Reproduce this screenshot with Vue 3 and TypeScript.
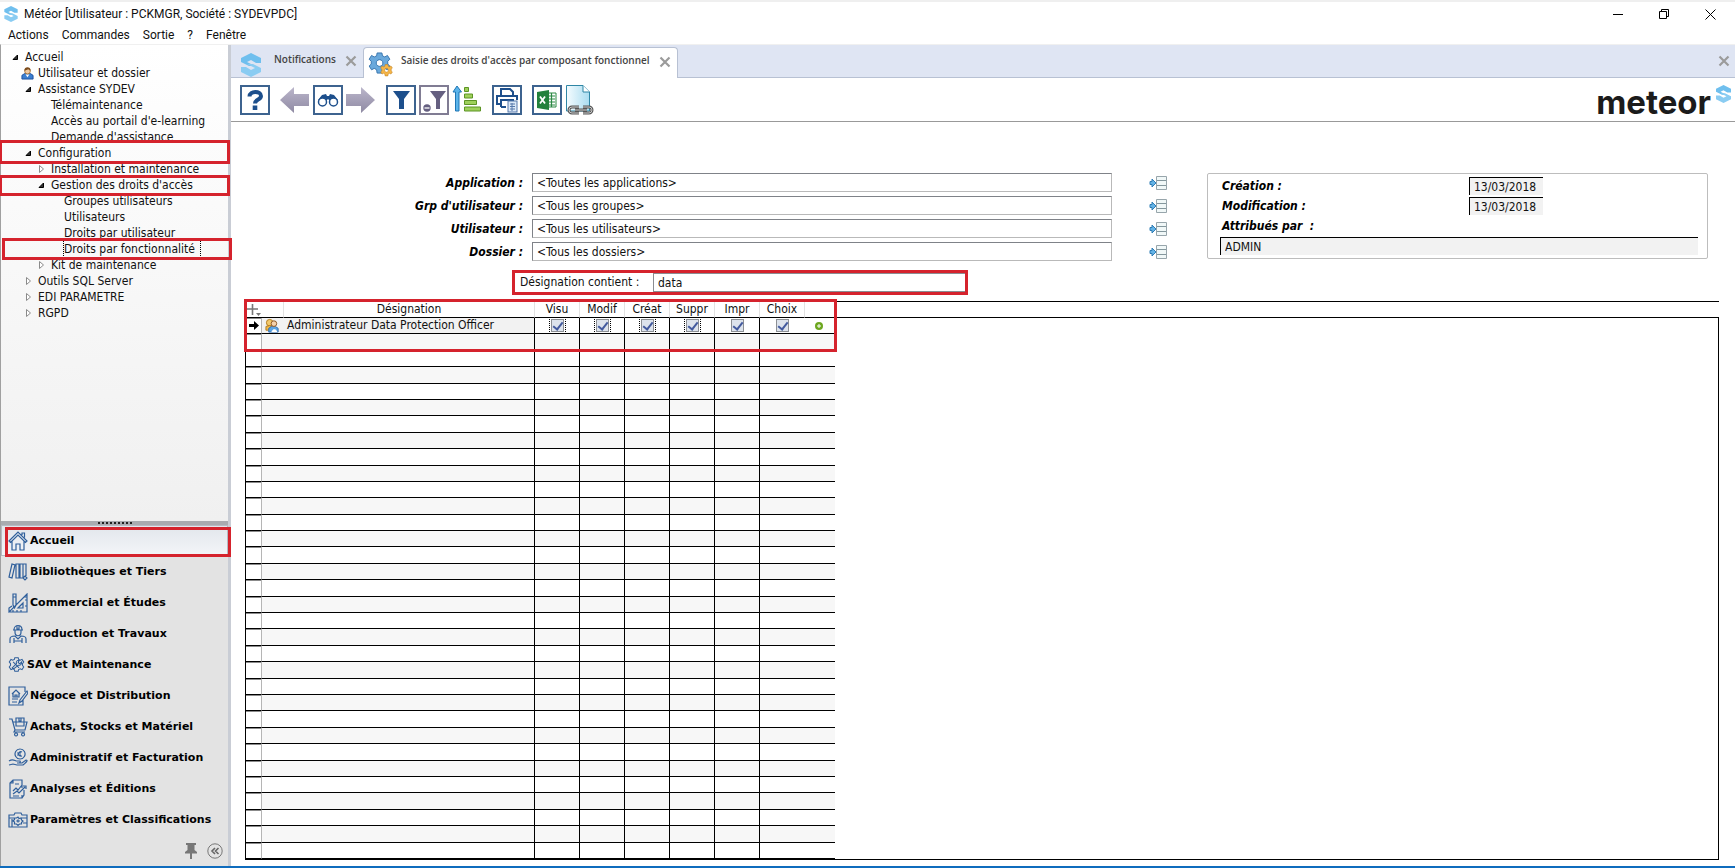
<script setup lang="ts">
import { ref } from 'vue'

interface TreeNode {
  label: string
  level: number
  state?: 'open' | 'closed'
  user?: boolean
  mark?: string
  focused?: boolean
}

const menus = ['Actions', 'Commandes', 'Sortie', '?', 'Fenêtre']

const tree: TreeNode[] = [
  { label: 'Accueil', level: 0, state: 'open' },
  { label: 'Utilisateur et dossier', level: 1, user: true },
  { label: 'Assistance SYDEV', level: 1, state: 'open' },
  { label: 'Télémaintenance', level: 2 },
  { label: "Accès au portail d'e-learning", level: 2 },
  { label: "Demande d'assistance", level: 2 },
  { label: 'Configuration', level: 1, state: 'open', mark: 'tall' },
  { label: 'Installation et maintenance', level: 2, state: 'closed' },
  { label: "Gestion des droits d'accès", level: 2, state: 'open', mark: 'short' },
  { label: 'Groupes utilisateurs', level: 3 },
  { label: 'Utilisateurs', level: 3 },
  { label: 'Droits par utilisateur', level: 3 },
  { label: 'Droits par fonctionnalité', level: 3, mark: 'shifted', focused: true },
  { label: 'Kit de maintenance', level: 2, state: 'closed' },
  { label: 'Outils SQL Server', level: 1, state: 'closed' },
  { label: 'EDI PARAMETRE', level: 1, state: 'closed' },
  { label: 'RGPD', level: 1, state: 'closed' },
]

const modules = [
  { label: 'Accueil', icon: 'M1 10 10 1 19 10 17.5 11.5 10 4 2.5 11.5zM4 10v9h4v-6h4v6h4v-9M14 4V2h2.5v4.5' },
  { label: 'Bibliothèques et Tiers', icon: 'M4 2 1 15l3 1L7 3zM8 2h3v14H8zM12 2h3v14h-3zM15 2h3v12M15 16l2-2 2 2-2 2z' },
  { label: 'Commercial et Études', icon: 'M5 1h3v11l-1.500 3L5 12zM5 4h3M19 1v18H1zM15 10v5h-5zM1 19v-4l3-2M16 4h3M17 7h2M17 13h2M5 19v-2M9 19v-2M13 19v-2' },
  { label: 'Production et Travaux', icon: 'M5 6h10M6 6c0-6 8-6 8 0M9 2v3h2V2M7 6v2c0 5 6 5 6 0V6M2 19v-4c0-2 2-3 5-3l3 3 3-3c3 0 5 1 5 3v4M6 14v5M14 14v5M6 17h8' },
  { label: 'SAV et Maintenance', small: true, icon: 'M8 2h4l.5 2 2 1 2-1 2 3-1.500 2v2l1.500 2-2 3-2-1-2 1-.5 2H8l-.5-2-2-1-2 1-2-3L3 11V9L1.500 7l2-3 2 1 2-1zM5 14l5-5c-1-3 1-4 3-4l-1 3 2 1 2-2c0 4-2 4-4 4l-5 4zM6 7l7 7' },
  { label: 'Négoce et Distribution', icon: 'M17 6V1H1v18h14v-5M4 8l4-4 4 4M5 7v4h6V7M7 11V9h2v2M4 13h6M4 16h5M19 5l-7 9-1 3 3-2 6-8z' },
  { label: 'Achats, Stocks et Matériel', icon: 'M1 2h3l3 11h10l2-8H5M8 1h8v8H8zM11 1v3h2V1M7 13l-1 2h11M8 16a1.500 1.500 0 1 0 .1 0M15 16a1.500 1.500 0 1 0 .1 0' },
  { label: 'Administratif et Facturation', icon: 'M12 1a5 5 0 1 0 .1 0M14 4c-4-2-5 5 0 4M9 5h4M9 7h4M1 13c4-3 6 0 8 0h3c1 2-1 2-3 2h5l4-3c2 0 1 2-3 5H9l-4-1-4 1' },
  { label: 'Analyses et Éditions', icon: 'M14 9V1H5L2 4v15h12v-3M5 1v3H2M5 12l3-3 2 2 4-5M5 15l4-3 2 2 6-6M15 7h3v3M5 17h6M7 5h4M16 11v5l-2 3' },
  { label: 'Paramètres et Classifications', icon: 'M1 5h5l1-2h6l1 2h5v12H1zM1 8h6M13 8h6M4 17V9M10 7l1 1.500 2-.5.5 2 1.500 1-1.500 1.500V14h-2l-1.500 1.500L8.500 14h-2v-2L5 11l1.500-1.500V8h2zM10 10a1 1 0 1 0 .1 0M15 13h4' },
]

const filters = [
  { id: 'application', label: 'Application :', value: '<Toutes les applications>' },
  { id: 'groupe', label: "Grp d'utilisateur :", value: '<Tous les groupes>' },
  { id: 'utilisateur', label: 'Utilisateur :', value: '<Tous les utilisateurs>' },
  { id: 'dossier', label: 'Dossier :', value: '<Tous les dossiers>' },
]

const rights = ref([
  { name: 'Visu', on: true, dotted: true },
  { name: 'Modif', on: true, dotted: true },
  { name: 'Créat', on: true, dotted: true },
  { name: 'Suppr', on: true, dotted: true },
  { name: 'Impr', on: true, dotted: false },
  { name: 'Choix', on: true, dotted: false },
])

const search = ref('data')
const emptyRows = 32
</script>

<template>
  <div class="window">
    <svg class="defs" aria-hidden="true">
      <symbol id="brand" viewBox="0 0 20 24">
        <path fill="#6fbfee" d="M10 0 20 5v5h-5L10 7 6 9l8 4H8L0 9V5z" />
        <path fill="#8accf2" d="M10 24 0 19v-5h5l5 3 4-2-8-4h6l8 4v4z" />
      </symbol>
      <symbol id="cross" viewBox="0 0 12 12">
        <path d="M1.500 1.500 10.500 10.500M10.500 1.500 1.500 10.500" stroke="#9b9b9b" stroke-width="2.200" />
      </symbol>
      <symbol id="user" viewBox="0 0 14 14">
        <path d="M1 13V9l3-2h6l3 2v4z" fill="#3b7fd0" stroke="#1d4f9c" />
        <path d="M5 8h4l-2 3z" fill="#fff" />
        <circle cx="7" cy="4.500" r="3" fill="#f0c9a0" stroke="#a87538" />
        <path d="M3.500 4c0-5 7-5 7 0L8 2.500z" fill="#7b4b1c" />
      </symbol>
      <symbol id="gear" viewBox="0 0 24 24">
        <path d="M9.500 1h5l.6 3 2.400 1.200 2.800-1.600 2.500 4-2.200 2v3l2.200 2-2.500 4-2.800-1.500L15 18.500 14.500 22h-5L9 18.500l-2.500-1.400-2.800 1.500-2.500-4 2.200-2v-3l-2.200-2 2.500-4 2.800 1.600L9 4zM12 8a3.500 3.500 0 1 0 .1 0z" fill-rule="evenodd" stroke="currentColor" />
      </symbol>
    </svg>

    <header class="titlebar">
      <svg class="app-icon"><use href="#brand" /></svg>
      <h1>Météor [Utilisateur : PCKMGR, Société : SYDEVPDC]</h1>
      <div class="window-buttons">
        <button aria-label="Réduire"><svg viewBox="0 0 11 11"><path d="M0 5.500h10" /></svg></button>
        <button aria-label="Restaurer"><svg viewBox="0 0 11 11"><path d="M.5 2.500h7v7h-7zM2.500 2.500v-2h7v7h-2" /></svg></button>
        <button aria-label="Fermer"><svg viewBox="0 0 11 11"><path d="M.5.5l10 10M10.500.5l-10 10" /></svg></button>
      </div>
    </header>
    <nav class="menubar">
      <button v-for="m in menus" :key="m">{{ m }}</button>
    </nav>

    <div class="workspace">
      <aside>
        <ul class="tree">
          <li v-for="n in tree" :key="n.label" :class="['level' + n.level, n.mark && 'mark', n.mark]">
            <span class="twisty">
              <svg v-if="n.user" viewBox="0 0 14 14"><use href="#user" /></svg>
              <svg v-else-if="n.state === 'open'" class="arrow" viewBox="0 0 7 8"><path d="M5.500 2v4.500H1z" fill="#333" stroke="#000" /></svg>
              <svg v-else-if="n.state === 'closed'" class="arrow" viewBox="0 0 7 8"><path d="M1.500.5v7L5.500 4z" fill="#fff" stroke="#8a8a8a" /></svg>
            </span>
            <a href="#" :class="{ focused: n.focused }">{{ n.label }}</a>
          </li>
        </ul>
        <div class="splitter"><i v-for="k in 9" :key="k"></i></div>
        <nav class="modules">
          <button v-for="(m, i) in modules" :key="m.label" :class="{ active: i === 0, mark: i === 0, small: m.small }">
            <svg viewBox="0 0 20 20"><path :d="m.icon" /></svg>{{ m.label }}
          </button>
        </nav>
        <div class="aside-foot">
          <button aria-label="Épingler">
            <svg viewBox="0 0 12 16"><path d="M1 0h10v2H9.500v5l2.500 2v1.500H7V16H5v-5.500H0V9l2.500-2V2H1z" fill="#777" /></svg>
          </button>
          <button aria-label="Replier">
            <svg viewBox="0 0 16 16"><circle cx="8" cy="8" r="7.200" fill="none" stroke="#777" /><path d="M8 5 5 8l3 3M11.500 5l-3 3 3 3" fill="none" stroke="#666" stroke-width="1.600" /></svg>
          </button>
        </div>
      </aside>

      <main>
        <div class="tabs">
          <div class="tab">
            <svg class="tab-brand"><use href="#brand" /></svg>
            <button class="tab-label">Notifications</button>
            <button class="close" aria-label="Fermer Notifications"><svg><use href="#cross" /></svg></button>
          </div>
          <div class="tab current">
            <svg class="tab-gears" viewBox="0 0 26 26">
              <use href="#gear" width="23" height="23" fill="#6aa9dc" color="#3674ae" />
              <use href="#gear" x="12" y="12" width="13" height="13" fill="#f5b547" color="#bd7c1c" />
            </svg>
            <button class="tab-label">Saisie des droits d'accès par composant fonctionnel</button>
            <button class="close" aria-label="Fermer l'onglet"><svg><use href="#cross" /></svg></button>
          </div>
          <button class="close all" aria-label="Fermer tout"><svg><use href="#cross" /></svg></button>
        </div>

        <div class="toolbar">
          <div class="group">
            <button class="boxed" aria-label="Aide">
              <svg viewBox="2 2 26 26" fill="none" stroke="#1d4f8c" stroke-width="4"><path d="M9.500 11.500c0-6 11.500-6 11.500-.5 0 4-6 3-6 7.500" /><path d="M15 20.500v4.500" stroke-width="4.600" /></svg>
            </button>
          </div>
          <div class="group">
            <button aria-label="Précédent">
              <svg viewBox="0 0 30 30"><path d="M0 15 14 2v7h15v12H14v7z" fill="url(#violet)" /><defs><linearGradient id="violet" x1="0" y1="0" x2="0" y2="1"><stop stop-color="#bbb6cb" /><stop offset="1" stop-color="#8f8aa3" /></linearGradient></defs></svg>
            </button>
            <button class="boxed" aria-label="Rechercher">
              <svg viewBox="2 2 26 26"><path d="M5 15 9 10l4-1 1 2h2l1-2 4 1 4 5-5 1h-3l-2-2-2 2H9z" fill="#1d4f8c" /><circle cx="9.500" cy="17" r="4" fill="#fff" stroke="#1d4f8c" stroke-width="1.500" /><circle cx="20.500" cy="17" r="4" fill="#fff" stroke="#1d4f8c" stroke-width="1.500" /></svg>
            </button>
            <button aria-label="Suivant">
              <svg viewBox="0 0 30 30"><path d="M29 15 15 2v7H0v12h15v7z" fill="url(#violet)" /></svg>
            </button>
          </div>
          <div class="group">
            <button class="boxed" aria-label="Filtrer">
              <svg viewBox="2 2 26 26"><path d="M7 6h17l-6 8v10h-5V14z" fill="#1d4f8c" /></svg>
            </button>
            <button class="boxed muted" aria-label="Retirer le filtre">
              <svg viewBox="2 2 26 26"><path d="M11 6h16l-6 8v10h-4V14z" fill="#655f80" /><circle cx="8" cy="23" r="3.700" fill="#655f80" /><path d="M5.500 23h5" stroke="#fff" stroke-width="1.300" /></svg>
            </button>
            <button aria-label="Trier">
              <svg viewBox="0 0 30 30"><path d="M5 1 1 7h2.500v19h3.500V7h2.500z" fill="#5bb4ea" stroke="#1f76b5" /><path d="M12.500 2.500h4v4h-4zM12.500 9h8v4h-8zM12.500 15.500h12v4h-12zM12.500 22h16v4h-16z" fill="#9ed05a" stroke="#5d9425" /></svg>
            </button>
          </div>
          <div class="group">
            <button class="boxed" aria-label="Imprimer">
              <svg viewBox="2 2 26 26"><path d="M9 11V4h9l3 3v4M9 19H5v-8h20v4M9 22v-7h12v2M9 22h5" fill="none" stroke="#1d4f8c" stroke-width="2" /><rect x="16" y="16" width="9" height="11" fill="#dbe8f7" stroke="#5678aa" /><path d="M18 19h5M18 21.500h5M18 24h5M20 18v8" stroke="#5678aa" /></svg>
            </button>
          </div>
          <div class="group">
            <button class="boxed" aria-label="Exporter vers Excel">
              <svg viewBox="2 2 26 26"><path d="M16 8h8v14h-8" fill="#fff" stroke="#2c8945" /><path d="M16 11h7M16 14h7M16 17h7M16 20h7M19.500 8v14" stroke="#2c8945" stroke-width="1.200" /><path d="M5 7l12-2v20L5 23z" fill="#23813c" /><path d="m8 11.500 5 7M13 11.500l-5 7" stroke="#fff" stroke-width="1.800" /></svg>
            </button>
            <button aria-label="Document lié">
              <svg viewBox="0 0 30 30"><path d="M1.500 26V.5H18L24.500 7v19z" fill="url(#sky)" stroke="#2f86a5" /><path d="M18 .5V7h6.500" fill="#fff" stroke="#2f86a5" /><path d="M14 22H7a3 3 0 0 0 0 6h7M18 28h6a3 3 0 0 0 0-6h-6M10 25h12" fill="none" stroke="#565656" stroke-width="3" /><path d="M14 22H7a3 3 0 0 0 0 6h7M18 28h6a3 3 0 0 0 0-6h-6M10 25h12" fill="none" stroke="#c9c9c9" /><defs><linearGradient id="sky"><stop stop-color="#f5fcff" /><stop offset="1" stop-color="#a9dcf0" /></linearGradient></defs></svg>
            </button>
          </div>
          <div class="logo">meteor<svg><use href="#brand" /></svg></div>
        </div>

        <form class="criteria" @submit.prevent>
          <div class="filters">
            <template v-for="f in filters" :key="f.id">
              <label :for="f.id">{{ f.label }}</label>
              <input :id="f.id" type="text" :value="f.value" />
              <button type="button" class="pick" :aria-label="'Choisir ' + f.label">
                <svg viewBox="0 0 18 14"><path d="M1 5.500h2V3l4 4-4 4V8.500H1z" fill="#63b3e6" stroke="#2f7db5" /><path d="M7.500.5h10v13h-10z" fill="#f1f8f8" stroke="#97a5ab" /><path d="M8 4.500h9M8 9.500h9" stroke="#84979d" /></svg>
              </button>
            </template>
          </div>
          <div class="audit">
            <label for="creation">Création :</label>
            <input id="creation" class="date" value="13/03/2018" readonly />
            <label for="modification">Modification :</label>
            <input id="modification" class="date" value="13/03/2018" readonly />
            <label for="attribues">Attribués par&nbsp; :</label>
            <input id="attribues" class="author" value="ADMIN" readonly />
          </div>
        </form>

        <div class="search mark">
          <label for="designation">Désignation contient :</label>
          <input id="designation" v-model="search" type="text" />
        </div>

        <section class="grid">
          <div class="grid-mark"></div>
          <table>
            <colgroup>
              <col class="c-sel" /><col class="c-icon" /><col class="c-name" />
              <col v-for="r in rights" :key="r.name" class="c-right" /><col class="c-add" />
            </colgroup>
            <thead>
              <tr>
                <th colspan="2" class="add">
                  <button aria-label="Colonnes"><svg viewBox="0 0 16 14"><path d="M1 6h11M6.500 1v11" stroke="#777" stroke-width="1.600" /><path d="M10 10h5l-2.500 3z" fill="#777" /></svg></button>
                </th>
                <th>Désignation</th>
                <th v-for="r in rights" :key="r.name">{{ r.name }}</th>
                <th class="end"></th>
              </tr>
            </thead>
            <tbody>
              <tr class="record">
                <td class="sel"><svg viewBox="0 0 10 9"><path d="M0 3h5V0l5 4.500L5 9V6H0z" /></svg></td>
                <td class="who">
                  <svg viewBox="0 0 16 16"><circle cx="5" cy="5" r="3.500" fill="#f3c96c" stroke="#b27a1b" /><path d="M1 13V9l4-1 3 2v3z" fill="#f0b94b" stroke="#b27a1b" /><path d="M4 15v-4l3-2h4l3 2v4z" fill="#5ba4e4" stroke="#2f6cb0" /><circle cx="9.500" cy="6" r="3" fill="#f5d2ac" stroke="#8a5320" /><path d="M7 14l2-2h2l2 2v1H7z" fill="#fff" /></svg>
                </td>
                <td class="name">Administrateur Data Protection Officer</td>
                <td v-for="r in rights" :key="r.name" class="right">
                  <label :class="{ dotted: r.dotted }"><input v-model="r.on" type="checkbox" :aria-label="r.name" /></label>
                </td>
                <td class="plus">
                  <button aria-label="Ajouter"><svg viewBox="0 0 8 8"><circle cx="4" cy="4" r="4" fill="#6da71f" /><path d="M4 2v4M2 4h4" stroke="#fff" stroke-width="1" /></svg></button>
                </td>
              </tr>
              <tr v-for="k in emptyRows" :key="k">
                <td class="sel"></td><td></td><td class="name"></td>
                <td v-for="r in rights" :key="r.name" class="right"></td>
                <td></td>
              </tr>
            </tbody>
          </table>
          <div class="rest"></div>
        </section>
      </main>
    </div>
  </div>
</template>

<style>
body { margin: 0; background: #fff; }
</style>

<style scoped>
* { box-sizing: border-box; }
.window {
  display: flex;
  flex-direction: column;
  height: 100vh;
  overflow: hidden;
  background: #fff;
  border-top: 2px solid #efefef;
  border-bottom: 2px solid #0f6cbd;
  font-family: "DejaVu Sans Condensed", "DejaVu Sans", sans-serif;
  font-size: 12px;
  line-height: 16px;
  color: #111;
}
.defs { position: absolute; width: 0; height: 0; }
button { border: 0; padding: 0; margin: 0; background: none; font: inherit; color: inherit; }
input { font: inherit; color: inherit; margin: 0; border-radius: 0; outline: 0; min-width: 0; }
svg { display: block; flex: none; }
a { color: inherit; text-decoration: none; }

.mark { position: relative; }
.mark::after, .grid-mark {
  content: "";
  position: absolute;
  border: 3px solid #d5232d;
  pointer-events: none;
  z-index: 2;
}

.titlebar { display: flex; align-items: center; height: 24px; padding-left: 4px; gap: 6px; font-family: Roboto, sans-serif; }
.titlebar h1 { margin: 0; font-size: 12px; font-weight: 400; }
.app-icon { width: 14px; height: 16px; }
.window-buttons { margin-left: auto; display: flex; margin-right: 2px; }
.window-buttons button { width: 46px; display: grid; place-items: center; }
.window-buttons svg { width: 11px; height: 11px; fill: none; stroke: #000; }
.menubar { display: flex; align-items: center; height: 18px; padding-left: 8px; gap: 13px; font-family: Roboto, sans-serif; }

.workspace { flex: 1; min-height: 0; display: flex; border-left: 1px solid #a0a0a0; border-top: 1px solid #f0f0f0; }
aside { width: 230px; flex: none; display: flex; flex-direction: column; border-right: 3px solid #c9cdd5; background: #e3e3e3; }
.tree { flex: 1; min-height: 0; margin: 0; padding: 4px 0 0; list-style: none; background: linear-gradient(#fff, #f0f0f0); }
.tree li { display: flex; align-items: center; height: 16px; white-space: nowrap; }
.twisty { width: 17px; display: flex; justify-content: flex-start; }
.twisty svg { width: 13px; height: 13px; }
.twisty svg.arrow { width: 7px; height: 8px; margin-left: 4px; }
.level0 { padding-left: 7px; }
.level1 { padding-left: 20px; }
.level2 { padding-left: 33px; }
.level3 { padding-left: 46px; }
.focused { outline: 1px dotted #000; padding-right: 5px; }
.tall::after { inset: -5px -2px -3px -2px; }
.short::after { inset: -2px -2px -3px -2px; }
.shifted::after { inset: -3px -4px -3px 1px; }

.splitter { height: 4px; display: flex; justify-content: center; gap: 2px; padding-top: 1px; background: #a9abb0; }
.splitter i { width: 2px; height: 2px; background: #222; }
.modules { display: flex; flex-direction: column; }
.modules button {
  display: flex;
  align-items: center;
  gap: 2px;
  height: 31px;
  padding: 0 0 0 7px;
  font: 700 11px/16px "DejaVu Sans", sans-serif;
  color: #000;
  white-space: nowrap;
  text-align: left;
}
.modules svg { width: 20px; height: 20px; fill: none; stroke: #2f5f9b; stroke-width: 1.200; }
.modules .small svg { width: 17px; height: 17px; }
.modules .active { border: 1px solid #b5bac3; background: linear-gradient(#e2e6ec, #f3f5f8); padding-left: 6px; }
.active::after { inset: 1px -4px -2px 3px; }
.aside-foot { height: 31px; display: flex; justify-content: flex-end; align-items: center; gap: 10px; padding-right: 5px; }
.aside-foot svg { height: 16px; }

main { flex: 1; min-width: 0; display: flex; flex-direction: column; background: #fff; }
.tabs { display: flex; height: 33px; padding-top: 2px; background: #dfe5f3; border-bottom: 1px solid #b8c1d3; }
.tab { display: flex; align-items: flex-start; height: 31px; padding: 0 6px 0 10px; }
.tab-label { height: 24px; font: 600 10px/14px "Open Sans", sans-serif; color: #444; white-space: nowrap; }
.tab-brand { width: 20px; height: 24px; margin-top: 6px; margin-right: 13px; }
.tab-gears { width: 26px; height: 26px; margin-top: 4px; margin-right: 7px; }
.current { background: #fff; border: 1px solid #b8c1d3; border-bottom: 0; border-radius: 4px 4px 0 0; padding: 0 6px 0 4px; }
.close { margin-top: 8px; margin-left: 9px; }
.close svg { width: 12px; height: 12px; }
.close.all { margin-left: auto; margin-right: 5px; align-self: flex-start; }

.toolbar { display: flex; align-items: center; gap: 10px; height: 44px; padding: 0 4px 0 9px; border-bottom: 1px solid #999; }
.group { display: flex; gap: 3px; }
.group button { width: 30px; height: 30px; }
.group svg { width: 100%; height: 100%; }
.boxed { border: 2px solid #3d638f; background: #fff; }
.boxed.muted { border-color: #807c93; }
.logo { margin-left: auto; display: flex; align-items: flex-start; gap: 5px; padding-top: 4px; font: 700 33px/34px Inter, sans-serif; color: #1b1b1b; }
.logo svg { width: 15px; height: 18px; }

.criteria { display: flex; margin: 51px 27px 0 0; align-items: flex-start; }
.filters { flex: 1; display: grid; grid-template-columns: 292px 1fr 46px; column-gap: 9px; row-gap: 4px; align-items: center; }
.filters label, .audit label { font-weight: 700; font-style: italic; color: #000; white-space: nowrap; }
.filters label { text-align: right; }
.filters input { height: 19px; padding: 0 4px; border: 1px solid #7f8288; border-bottom-color: #b9b9b9; border-right-color: #b9b9b9; background: #fff; }
.pick { justify-self: end; }
.pick svg { width: 18px; height: 14px; }
.audit {
  width: 501px;
  margin-left: 40px;
  padding: 3px 9px 3px 12px;
  border: 1px solid #bdbdbd;
  border-radius: 2px;
  display: grid;
  grid-template-columns: 249px 1fr;
  row-gap: 2px;
}
.audit label { padding-left: 2px; line-height: 18px; }
.audit input { height: 18px; border: solid #000; border-width: 1px 0 0 1px; background: #f2f2f2; padding: 0 4px; }
.audit .date { width: 74px; }
.audit .author { grid-column: 1 / -1; }

.search { display: flex; align-items: stretch; width: 456px; height: 25px; margin-left: 281px; margin-top: 9px; padding: 3px; }
.search::after { inset: 0; }
.search label { width: 138px; padding-left: 5px; line-height: 19px; }
.search input { flex: 1; border: solid #8b8d92; border-width: 1px 0 1px 1px; padding: 0 4px; }

.grid { position: relative; flex: 1; min-height: 0; display: flex; margin: 6px 16px 6px 14px; border-top: 1px solid #000; border-bottom: 1px solid #000; }
.grid-mark { inset: -3px auto auto -1px; width: 593px; height: 53px; }
table { width: 590px; height: 100%; table-layout: fixed; border-collapse: separate; border-spacing: 0; border-left: 1px solid #000; }
.c-sel { width: 16px; }
.c-icon { width: 22px; }
.c-name { width: 251px; }
.c-right { width: 45px; }
.c-add { width: 30px; }
th, td { padding: 0; border-bottom: 1px solid #000; height: 16px; line-height: 15px; }
th { font-weight: 400; border-right: 1px solid #e2e2e2; }
th.end { border-right: 0; }
th.add button { display: block; }
th.add svg { width: 16px; height: 14px; }
tbody tr:nth-child(even) td { background: #f7f7f7; }
tbody tr td.sel { background: #fff; border-right: 1px solid #b5b5b5; box-shadow: inset 0 1px #8b8b8b; }
tbody tr .name, tbody tr .right { border-right: 1px solid #000; }
tbody tr .right:nth-last-child(2) { border-right: 0; }
.record .name { background: #f2f2f2; padding-left: 3px; white-space: nowrap; }
.record .who { background: #f2f2f2; }
.sel svg { width: 10px; height: 9px; margin: 0 auto; }
.who svg { width: 15px; height: 15px; margin-left: 3px; }
.record .right label { display: block; width: 15px; height: 15px; margin: 0 auto; }
.record .right label.dotted { outline: 1px dotted #000; }
.right input { appearance: none; display: block; width: 13px; height: 13px; margin: 0 1px; border: 1px solid #8c8f94; background: #dde3ec; position: relative; top: 1px; }
.right input:checked::after { content: ""; position: absolute; left: 3px; top: 0; width: 4px; height: 8px; border: solid #435a9e; border-width: 0 2px 2px 0; transform: rotate(38deg); }
.plus svg { width: 8px; height: 8px; margin-left: 10px; }
.plus button { display: block; }
.rest { flex: 1; margin-top: 15px; border-top: 1px solid #000; border-right: 1px solid #000; }
</style>
